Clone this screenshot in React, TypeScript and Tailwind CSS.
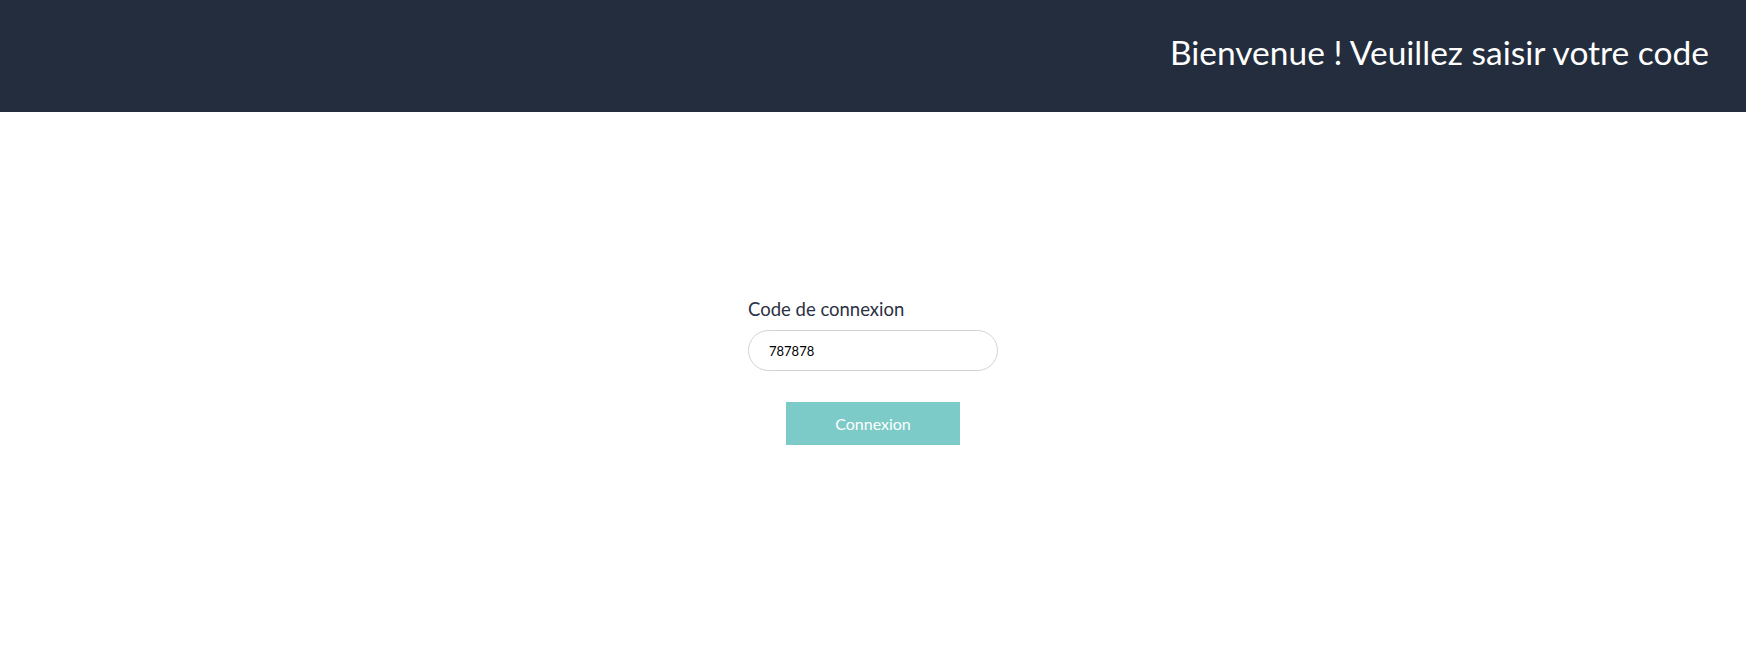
export default function App() {
  return (
    <div className="min-h-screen bg-white" style={{ fontFamily: "Lato, 'Open Sans', sans-serif" }}>
      {/* HEADER */}
      <div className="flex h-[112px] items-center justify-end bg-[#232d3d] pb-[7px] pr-[37px]">
        <h1 className="text-[33.5px] font-normal leading-none text-white">
          Bienvenue ! Veuillez saisir votre code
        </h1>
      </div>

      {/* FORM */}
      <div className="flex justify-center pt-[186px]">
        <div className="flex w-[250px] flex-col">
          <label className="mb-[10px] text-[18.5px] leading-[22px] text-[#2b3142]">Code de connexion</label>
          <input
            defaultValue="787878"
            className="h-[41px] w-full rounded-full border border-[#d3d3d3] px-[20px] text-[13px] text-black outline-none"
          />
          <div className="mt-[31px] flex justify-center">
            <button className="h-[43px] w-[174px] bg-[#7ccbc8] text-[16px] text-white">Connexion</button>
          </div>
        </div>
      </div>
    </div>
  );
}
